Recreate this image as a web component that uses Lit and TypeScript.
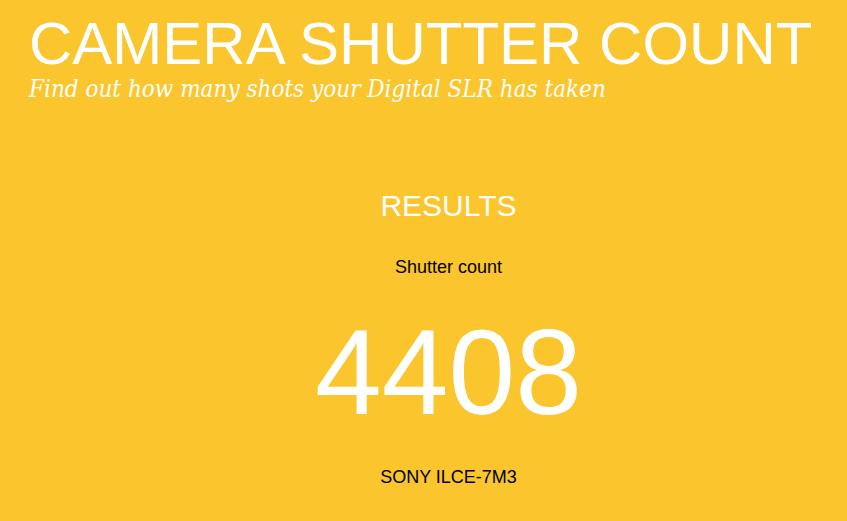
import { LitElement, html, css } from "lit";
import { customElement } from "lit/decorators.js";

@customElement("app-root")
export class AppRoot extends LitElement {
  static styles = css`
    :host {
      display: block;
      min-height: 100vh;
      box-sizing: border-box;
      background: #fbc52d;
      color: #fff;
      font-family: "Liberation Sans", Arial, sans-serif;
    }
    h1, h2, p { margin: 0; font-weight: 400; }
    header { padding: 12px 0 0 29px; }
    h1 { font-size: 60px; line-height: 64px; white-space: nowrap; }
    .tagline {
      font-family: Georgia, "DejaVu Serif Condensed", "DejaVu Serif", serif;
      font-style: italic;
      font-size: 24px;
      line-height: 26px;
    }
    main {
      display: flex;
      flex-direction: column;
      align-items: center;
      padding: 85px 0 24px 50px;
    }
    h2 { font-size: 30px; line-height: 38px; }
    .label { color: #000; font-size: 18px; line-height: 20px; }
    h2 + .label { margin-top: 32px; }
    .count { font-size: 120px; line-height: 120px; margin: 35px 0; }
  `;

  render() {
    return html`
      <header>
        <h1>CAMERA SHUTTER COUNT</h1>
        <p class="tagline">Find out how many shots your Digital SLR has taken</p>
      </header>
      <main>
        <h2>RESULTS</h2>
        <p class="label">Shutter count</p>
        <p class="count">4408</p>
        <p class="label">SONY ILCE-7M3</p>
      </main>
    `;
  }
}
